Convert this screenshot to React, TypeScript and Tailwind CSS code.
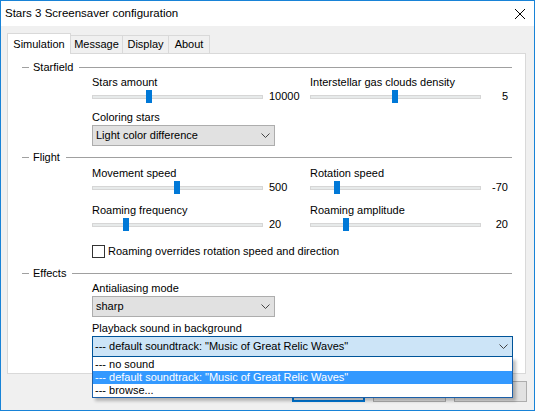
import React from "react";

function SectionHeader({ title }: { title: string }) {
  return (
    <div className="flex items-center h-[14px] pl-[14px] pr-[13px]">
      <div className="w-[7px] h-px bg-[#a0a0a0]" />
      <span className="ml-[4px] mr-[6px] leading-none">{title}</span>
      <div className="flex-1 h-px bg-[#a0a0a0]" />
    </div>
  );
}

function Track({ pos }: { pos: number }) {
  return (
    <div className="relative w-[171px] h-[13px] flex items-center">
      <div className="w-full h-[4px] bg-[#e7eaea] border border-[#d6d6d6]" />
      <div
        className="absolute top-0 w-[6px] h-[13px] bg-[#0078d7]"
        style={{ left: pos }}
      />
    </div>
  );
}

function LeftSlider({ pos, value }: { pos: number; value: string }) {
  return (
    <div className="flex items-center h-[13px]">
      <Track pos={pos} />
      <span className="ml-[6px] leading-none">{value}</span>
    </div>
  );
}

function RightSlider({ pos, value }: { pos: number; value: string }) {
  return (
    <div className="flex items-center h-[13px]">
      <Track pos={pos} />
      <span className="w-[27px] text-right leading-none">{value}</span>
    </div>
  );
}

function Chevron() {
  return (
    <svg width="9" height="5" viewBox="0 0 9 5" className="block">
      <path d="M0.5 0.5 L4.5 4.5 L8.5 0.5" fill="none" stroke="#444" strokeWidth="1" />
    </svg>
  );
}

function Combo({ text, width }: { text: string; width: string }) {
  return (
    <div
      className={`${width} h-[21px] bg-[#e1e1e1] border border-[#adadad] flex items-center justify-between pl-[3px] pr-[4px]`}
    >
      <span className="leading-none">{text}</span>
      <Chevron />
    </div>
  );
}

export default function App() {
  return (
    <div className="w-[535px] h-[411px] border border-[#1883d7] bg-[#f0f0f0] flex flex-col text-[11px] text-black font-['Liberation_Sans',Arial,sans-serif] overflow-hidden">
      {/* title bar */}
      <div className="h-[25px] bg-white flex items-center justify-between shrink-0">
        <span className="pl-[4px] text-[11.5px] leading-none">Stars 3 Screensaver configuration</span>
        <svg width="10" height="10" viewBox="0 0 10 10" className="mr-[9px]">
          <path d="M0 0 L10 10 M10 0 L0 10" stroke="#000" strokeWidth="1" />
        </svg>
      </div>

      <div className="pl-[6px] mt-[7px] flex flex-col">
        {/* tabs */}
        <div className="flex items-end h-[20px]">
          <div className="relative z-10 w-[64px] h-[21px] -mb-px bg-white border-t border-l border-r border-[#d9d9d9] flex items-center justify-center">
            Simulation
          </div>
          <div className="-ml-px w-[53px] h-[18px] bg-[#f0f0f0] border-t border-l border-r border-[#d9d9d9] flex items-center justify-center">
            Message
          </div>
          <div className="-ml-px w-[47px] h-[18px] bg-[#f0f0f0] border-t border-l border-r border-[#d9d9d9] flex items-center justify-center">
            Display
          </div>
          <div className="-ml-px w-[42px] h-[18px] bg-[#f0f0f0] border-t border-l border-r border-[#d9d9d9] flex items-center justify-center">
            About
          </div>
        </div>

        {/* tab page */}
        <div className="relative w-[519px] h-[321px] bg-white border border-[#d9d9d9] flex flex-col">
          <div className="mt-[6px]">
            <SectionHeader title="Starfield" />
          </div>
          <div className="pl-[84px] flex">
            <div className="w-[218px] flex flex-col">
              <div className="h-[16px] flex items-center">Stars amount</div>
              <LeftSlider pos={54} value="10000" />
              <div className="mt-[7px] h-[14px] flex items-center">Coloring stars</div>
              <div className="mt-px">
                <Combo text="Light color difference" width="w-[183px]" />
              </div>
            </div>
            <div className="w-[198px] flex flex-col">
              <div className="h-[16px] flex items-center">Interstellar gas clouds density</div>
              <RightSlider pos={82} value="5" />
            </div>
          </div>

          <div className="mt-[4px]">
            <SectionHeader title="Flight" />
          </div>
          <div className="pl-[84px] flex mt-px">
            <div className="w-[218px] flex flex-col">
              <div className="h-[16px] flex items-center">Movement speed</div>
              <LeftSlider pos={82} value="500" />
              <div className="mt-[8px] h-[16px] flex items-center">Roaming frequency</div>
              <LeftSlider pos={31} value="20" />
            </div>
            <div className="w-[198px] flex flex-col">
              <div className="h-[16px] flex items-center">Rotation speed</div>
              <RightSlider pos={24} value="-70" />
              <div className="mt-[8px] h-[16px] flex items-center">Roaming amplitude</div>
              <RightSlider pos={33} value="20" />
            </div>
          </div>
          <div className="pl-[84px] mt-[13px] h-[15px] flex items-center">
            <div className="w-[13px] h-[13px] border border-[#333] bg-white" />
            <span className="ml-[3px]">Roaming overrides rotation speed and direction</span>
          </div>

          <div className="mt-[7px]">
            <SectionHeader title="Effects" />
          </div>
          <div className="pl-[84px] flex flex-col mt-px">
            <div className="h-[14px] flex items-center">Antialiasing mode</div>
            <div className="mt-px">
              <Combo text="sharp" width="w-[183px]" />
            </div>
            <div className="mt-[4px] h-[14px] flex items-center">Playback sound in background</div>
            <div className="relative mt-px w-[421px]">
              <div className="h-[21px] bg-[#cce4f7] border border-[#005499] flex items-center justify-between pl-[2px] pr-[4px]">
                <span className="leading-none">--- default soundtrack: "Music of Great Relic Waves"</span>
                <Chevron />
              </div>
              {/* open drop-down list */}
              <div className="absolute left-0 top-full z-20 w-[421px] h-[41px] bg-white border-l border-r border-b border-[#1c5fa8] shadow-[3px_3px_3px_rgba(0,0,0,0.25)] flex flex-col pt-px">
                <div className="h-[13px] flex items-center pl-[2px]">--- no sound</div>
                <div className="h-[13px] flex items-center pl-[2px] bg-[#3399ff] text-white">
                  --- default soundtrack: "Music of Great Relic Waves"
                </div>
                <div className="h-[13px] flex items-center pl-[2px]">--- browse...</div>
              </div>
            </div>
          </div>
        </div>

        {/* dialog buttons */}
        <div className="mt-[7px] flex justify-end gap-[8px] pr-[7px]">
          <div className="w-[73px] h-[21px] bg-[#e1e1e1] border-2 border-[#0078d7] flex items-center justify-center">OK</div>
          <div className="w-[73px] h-[21px] bg-[#e1e1e1] border border-[#adadad] flex items-center justify-center">Cancel</div>
          <div className="w-[73px] h-[21px] bg-[#e1e1e1] border border-[#adadad] flex items-center justify-center">Apply</div>
        </div>
      </div>
    </div>
  );
}
